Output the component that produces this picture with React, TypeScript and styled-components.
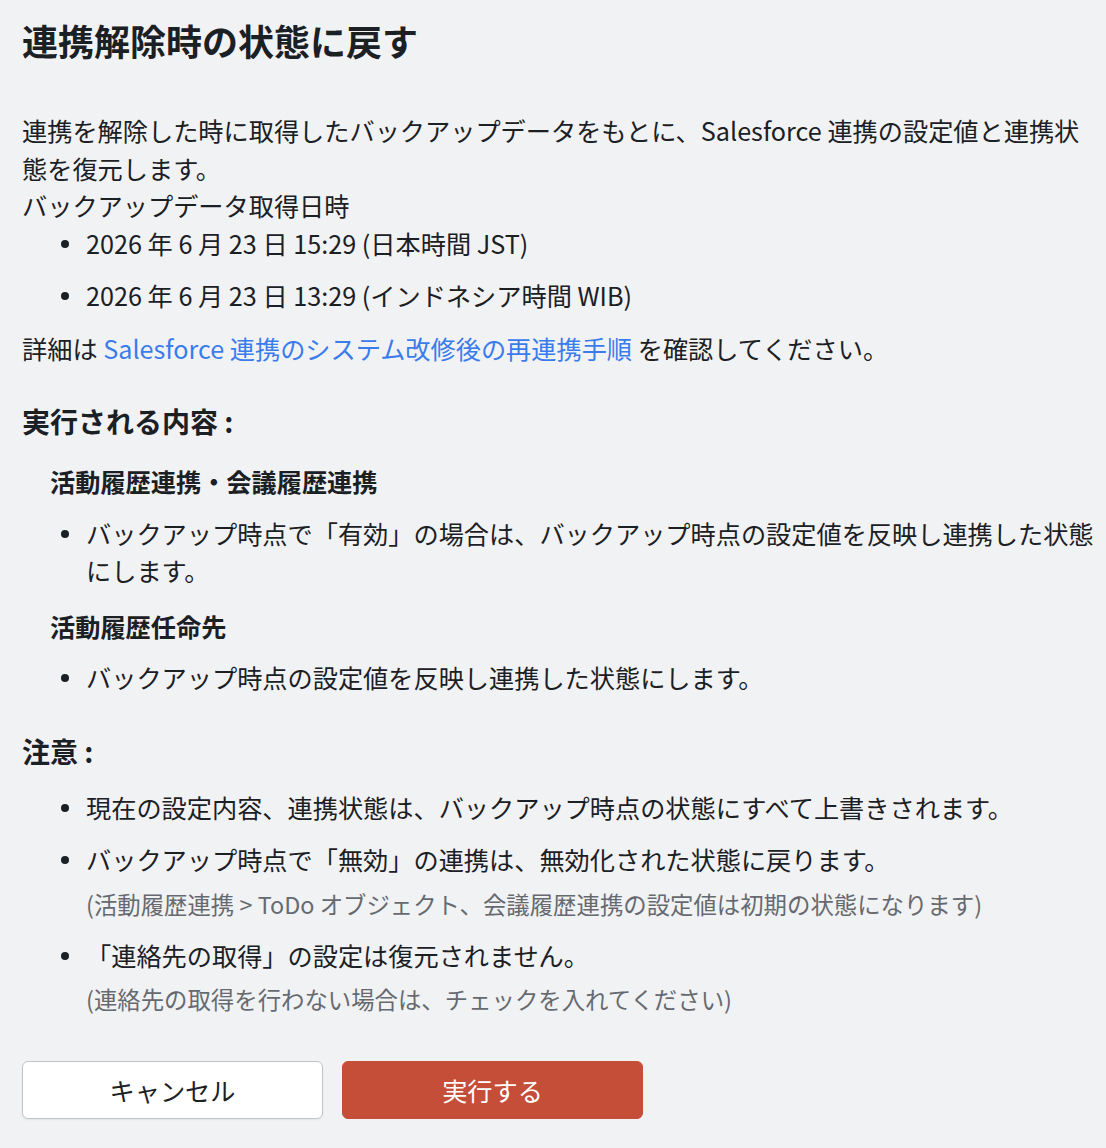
import React from "react";
import styled, { createGlobalStyle } from "styled-components";

const GlobalStyle = createGlobalStyle`
  html, body {
    margin: 0;
    padding: 0;
    background: #f1f2f4;
  }
  body {
    font-family: "Noto Sans CJK JP", "Noto Sans", sans-serif;
    color: #1b2024;
  }
  * { box-sizing: border-box; }
`;

const Page = styled.div`
  padding: 13px 8px 30px 22px;
  font-size: 25.2px;
  line-height: 37.5px;
`;

const Title = styled.h1`
  margin: 0;
  font-size: 36px;
  line-height: 54px;
  font-weight: 700;
`;

const Intro = styled.div`
  margin-top: 45px;
`;

const Para = styled.p`
  margin: 0;
`;

const List = styled.ul<{ $gap?: number; $after?: number; $before?: number }>`
  list-style: none;
  margin: ${(p) => p.$before ?? 0}px 0 ${(p) => p.$after ?? 15}px 0;
  padding: 0;
  display: flex;
  flex-direction: column;
  gap: ${(p) => p.$gap ?? 15}px;
`;

const Item = styled.li`
  display: flex;
  align-items: flex-start;
  &::before {
    content: "";
    flex-shrink: 0;
    width: 8px;
    height: 8px;
    border-radius: 50%;
    background: #1b2024;
    margin: 15px 17px 0 39px;
  }
`;

const ItemBody = styled.div`
  display: flex;
  flex-direction: column;
`;

const Note = styled.span`
  margin: 9px 0 2px 0;
  font-size: 23.4px;
  line-height: 32px;
  color: #666a70;
`;

const Link = styled.a`
  color: #3b7cec;
  text-decoration: none;
`;

const SectionHeading = styled.h2<{ $top: number }>`
  margin: ${(p) => p.$top}px 0 0 0;
  font-size: 28px;
  line-height: 42px;
  font-weight: 700;
`;

const SubHeading = styled.h3<{ $top: number }>`
  margin: ${(p) => p.$top}px 0 14px 28px;
  font-size: 25.2px;
  line-height: 37.5px;
  font-weight: 700;
`;

const Buttons = styled.div`
  margin-top: 44px;
  display: flex;
  gap: 19px;
`;

const Button = styled.button<{ $primary?: boolean }>`
  width: 301px;
  height: 58px;
  border-radius: 6px;
  font-family: "Noto Sans CJK JP", "Noto Sans", sans-serif;
  font-size: 25.2px;
  cursor: pointer;
  border: 1px solid ${(p) => (p.$primary ? "#c44e37" : "#bfc5cd")};
  background: ${(p) => (p.$primary ? "#c44e37" : "#ffffff")};
  color: ${(p) => (p.$primary ? "#ffffff" : "#1b2024")};
  box-shadow: ${(p) => (p.$primary ? "none" : "0 1px 2px rgba(0,0,0,0.06)")};
`;

export default function App() {
  return (
    <>
      <GlobalStyle />
      <Page>
        <Title>連携解除時の状態に戻す</Title>
        <Intro>
          <Para>
            連携を解除した時に取得したバックアップデータをもとに、Salesforce 連携の設定値と連携状態を復元します。
          </Para>
          <Para>バックアップデータ取得日時</Para>
          <List>
            <Item>2026 年 6 月 23 日 15:29 (日本時間 JST)</Item>
            <Item>2026 年 6 月 23 日 13:29 (インドネシア時間 WIB)</Item>
          </List>
          <Para>
            詳細は <Link href="#">Salesforce 連携のシステム改修後の再連携手順</Link> を確認してください。
          </Para>
        </Intro>

        <SectionHeading $top={33}>実行される内容 :</SectionHeading>
        <SubHeading $top={21}>活動履歴連携・会議履歴連携</SubHeading>
        <List $after={18}>
          <Item>
            バックアップ時点で「有効」の場合は、バックアップ時点の設定値を反映し連携した状態にします。
          </Item>
        </List>
        <SubHeading $top={0}>活動履歴任命先</SubHeading>
        <List $after={0}>
          <Item>バックアップ時点の設定値を反映し連携した状態にします。</Item>
        </List>

        <SectionHeading $top={33}>注意 :</SectionHeading>
        <List $gap={15} $after={0} $before={17}>
          <Item>現在の設定内容、連携状態は、バックアップ時点の状態にすべて上書きされます。</Item>
          <Item>
            <ItemBody>
              <span>バックアップ時点で「無効」の連携は、無効化された状態に戻ります。</span>
              <Note>(活動履歴連携 &gt; ToDo オブジェクト、会議履歴連携の設定値は初期の状態になります)</Note>
            </ItemBody>
          </Item>
          <Item>
            <ItemBody>
              <span>「連絡先の取得」の設定は復元されません。</span>
              <Note>(連絡先の取得を行わない場合は、チェックを入れてください)</Note>
            </ItemBody>
          </Item>
        </List>

        <Buttons>
          <Button type="button">キャンセル</Button>
          <Button type="button" $primary>
            実行する
          </Button>
        </Buttons>
      </Page>
    </>
  );
}
